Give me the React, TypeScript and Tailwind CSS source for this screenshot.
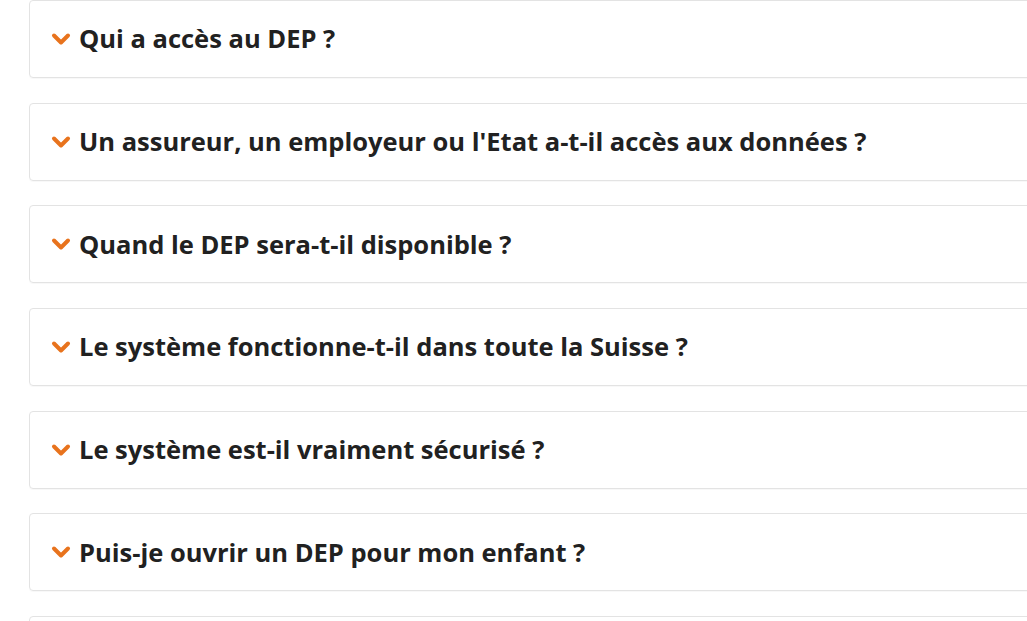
const questions = [
  "Qui a accès au DEP ?",
  "Un assureur, un employeur ou l'Etat a-t-il accès aux données ?",
  "Quand le DEP sera-t-il disponible ?",
  "Le système fonctionne-t-il dans toute la Suisse ?",
  "Le système est-il vraiment sécurisé ?",
  "Puis-je ouvrir un DEP pour mon enfant ?",
];

const Chevron = () => (
  <svg width="20" height="14" viewBox="0 0 20 14" className="shrink-0">
    <polyline
      points="3,3.5 10,10.5 17,3.5"
      fill="none"
      stroke="#e8731d"
      strokeWidth="4"
      strokeLinecap="round"
      strokeLinejoin="round"
    />
  </svg>
);

export default function App() {
  return (
    <div
      className="h-[621px] w-full overflow-hidden bg-white pl-[29px]"
      style={{ fontFamily: '"Open Sans", "Liberation Sans", sans-serif' }}
    >
      <div className="w-[1100px]">
        {questions.map((q) => (
          <div
            key={q}
            className="mb-[24.7px] flex h-[78px] items-center gap-[8px] rounded-[4px] border border-[#e3e3e3] pl-[21px] shadow-[0_1px_1px_rgba(0,0,0,0.03)]"
          >
            <Chevron />
            <span className="text-[25.5px] font-bold leading-none text-[#212121]">{q}</span>
          </div>
        ))}
        {/* next item, only its top edge is in view */}
        <div className="h-[78px] rounded-[4px] border border-[#e3e3e3]" />
      </div>
    </div>
  );
}
